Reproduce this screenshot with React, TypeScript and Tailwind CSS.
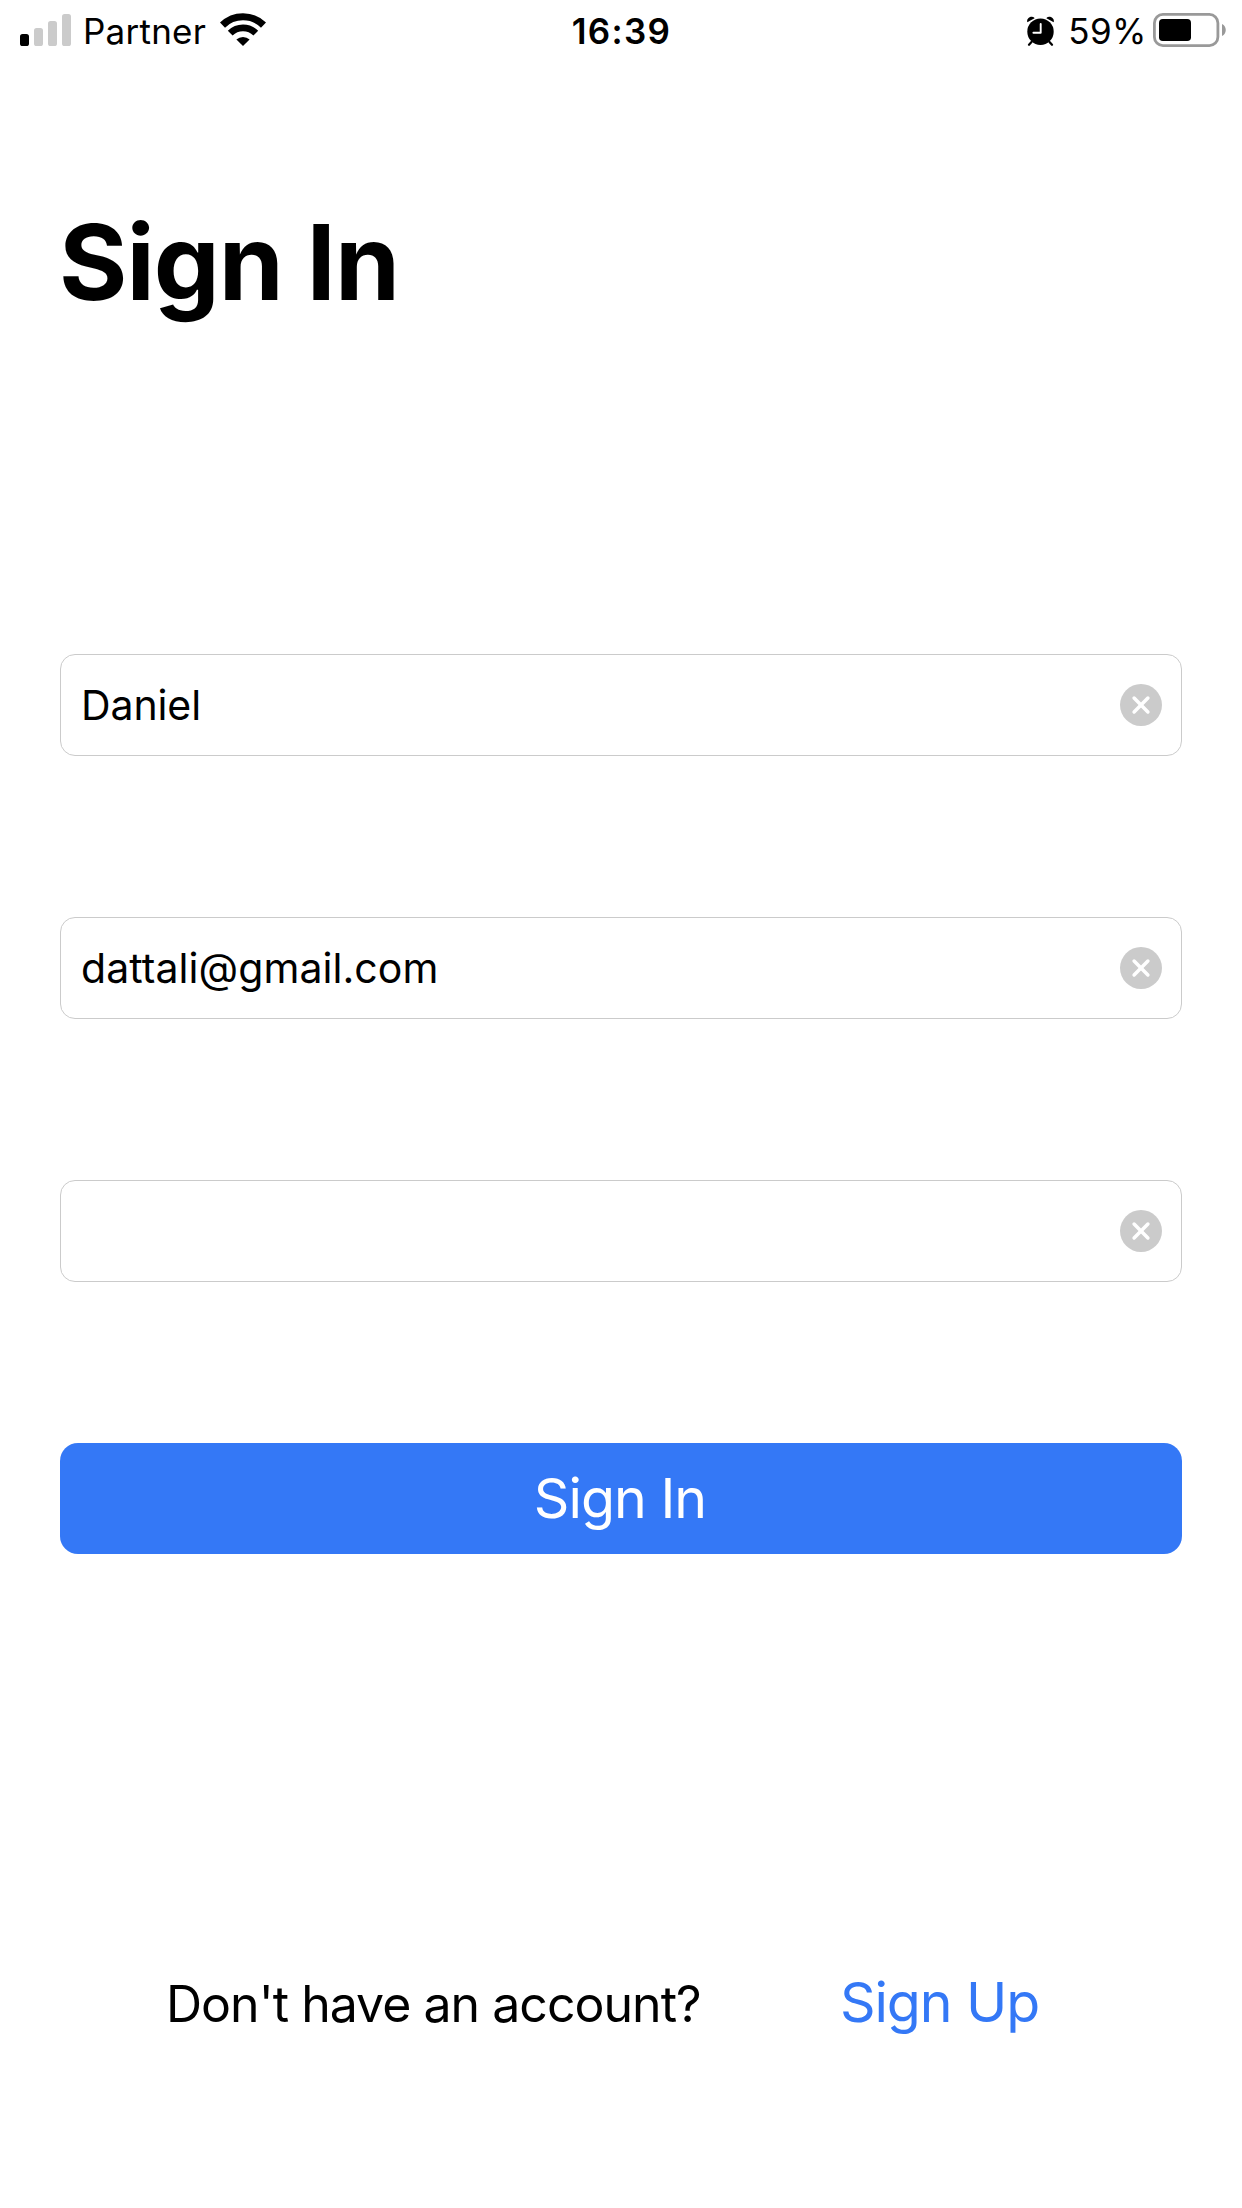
import React from 'react';

function SignalIcon() {
  return (
    <svg width="51" height="32" viewBox="0 0 51 32" className="shrink-0">
      <rect x="0" y="20" width="9" height="12" rx="2.6" fill="#000" />
      <rect x="14" y="14" width="9" height="18" rx="2.6" fill="#cbcbcb" />
      <rect x="28" y="7" width="9" height="25" rx="2.6" fill="#cbcbcb" />
      <rect x="42" y="0" width="9" height="32" rx="2.6" fill="#cbcbcb" />
    </svg>
  );
}

function WifiIcon() {
  return (
    <svg width="46" height="34" viewBox="0 0 46 34" fill="none" stroke="#000" className="shrink-0">
      <path d="M2.5 12.1A29.3 29.3 0 0 1 43.5 12.1" strokeWidth="7.2" />
      <path d="M10.2 20.1A18.3 18.3 0 0 1 35.8 20.1" strokeWidth="6.8" />
      <path d="M23 33L16.4 26.6A9.6 9.6 0 0 1 29.6 26.6Z" fill="#000" stroke="none" />
    </svg>
  );
}

function AlarmIcon() {
  return (
    <svg width="27" height="30" viewBox="0 0 27 30" fill="none" className="shrink-0">
      <path d="M0.3 6.2C-0.6 3.2 2 0.6 5 0.7C6.4 0.8 7.3 1.4 7.6 2.2Z" fill="#000" />
      <path d="M26.7 6.2C27.6 3.2 25 0.6 22 0.7C20.6 0.8 19.7 1.4 19.4 2.2Z" fill="#000" />
      <path d="M4.5 26L2 28.8M22.5 26L25 28.8" stroke="#000" strokeWidth="2.2" strokeLinecap="round" />
      <circle cx="13.5" cy="15.7" r="13.2" fill="#000" />
      <path d="M13.7 8V16.8H6.4" stroke="#fff" strokeWidth="1.9" strokeLinecap="round" strokeLinejoin="round" />
    </svg>
  );
}

function BatteryIcon() {
  return (
    <svg width="73" height="34" viewBox="0 0 73 34" className="shrink-0">
      <rect x="1.4" y="1.4" width="63.5" height="31.2" rx="8.5" fill="none" stroke="#999" strokeWidth="2.8" />
      <rect x="6" y="6" width="32" height="22" rx="3.8" fill="#000" />
      <path d="M69 11C74 13 74 21 69 23Z" fill="#999" />
    </svg>
  );
}

function ClearIcon() {
  return (
    <svg width="42" height="42" viewBox="0 0 42 42">
      <circle cx="21" cy="21" r="21" fill="#cbcbcb" />
      <path d="M14.1 14.1L27.9 27.9M27.9 14.1L14.1 27.9" stroke="#fff" strokeWidth="3.5" strokeLinecap="round" />
    </svg>
  );
}

function Field({ value, label, spacing }: { value: string; label: string; spacing: string }) {
  return (
    <div className="flex h-[102px] items-center rounded-[15px] border border-[#cbcbcb] pr-[19px] pl-[20px]">
      <input
        aria-label={label}
        defaultValue={value}
        className={`h-full min-w-0 flex-1 bg-transparent text-[41px] text-black outline-none ${spacing}`}
      />
      <button type="button" aria-label={`Clear ${label}`}>
        <ClearIcon />
      </button>
    </div>
  );
}

export default function App() {
  return (
    <div className="flex h-[2208px] w-[1242px] flex-col bg-white font-['Inter',sans-serif] text-black">
      <header className="grid h-[62px] grid-cols-3 items-center text-[35px] leading-none">
        <div className="flex items-center pl-[20px]">
          <div className="-mt-[2px]">
            <SignalIcon />
          </div>
          <span className="ml-[12px] tracking-[0.25px]">Partner</span>
          <div className="-mt-[3px] ml-[14px]">
            <WifiIcon />
          </div>
        </div>
        <span className="pl-px text-center font-semibold tracking-[1.3px]">16:39</span>
        <div className="flex items-center justify-end pr-[16px]">
          <div className="-mt-px">
            <AlarmIcon />
          </div>
          <span className="ml-[14px] tracking-[0.5px]">59%</span>
          <div className="-mt-[3px] ml-[6px]">
            <BatteryIcon />
          </div>
        </div>
      </header>

      <main className="flex flex-col px-[60px]">
        <h1 className="-ml-px flex h-[400px] items-center text-[104.5px] leading-none font-bold tracking-[-1px]">
          Sign In
        </h1>
        <form className="mt-[192px] flex flex-col gap-[161px]" onSubmit={(e) => e.preventDefault()}>
          <Field label="name" value="Daniel" spacing="tracking-[-0.1px]" />
          <Field label="email" value="dattali@gmail.com" spacing="tracking-[0.07px]" />
          <Field label="password" value="" spacing="tracking-normal" />
          <button
            type="submit"
            className="flex h-[111px] items-center justify-center rounded-[18px] bg-[#3478f6] pr-[2px] pb-[2px] text-[55.5px] leading-none tracking-[-0.98px] text-white"
          >
            Sign In
          </button>
        </form>
      </main>

      <footer className="mt-[392px] flex h-[112px] items-center pl-[166px] leading-none whitespace-nowrap">
        <span className="mt-[3px] w-[674px] text-[50px] tracking-[-0.98px]">Don't have an account?</span>
        <a href="#" className="text-[55.5px] tracking-[-1.1px] text-[#3478f6]">
          Sign Up
        </a>
      </footer>
    </div>
  );
}
